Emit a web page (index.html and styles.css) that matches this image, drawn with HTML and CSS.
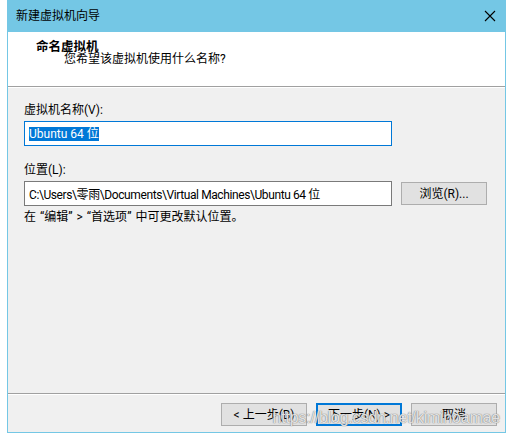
FILE: index.html
```html
<!DOCTYPE html>
<html lang="zh-CN">
<head>
<meta charset="utf-8">
<title>新建虚拟机向导</title>
<link rel="stylesheet" href="styles.css">
</head>
<body>
<div class="window">
  <div class="titlebar">
    <span class="title">新建虚拟机向导</span>
    <svg class="close" width="12" height="12" viewBox="0 0 12 12"><path d="M1 1L11 11M11 1L1 11" stroke="#000" stroke-width="1.1" fill="none"/></svg>
  </div>
  <div class="header">
    <div class="h-title">命名虚拟机</div>
    <div class="h-sub">您希望该虚拟机使用什么名称?</div>
  </div>
  <div class="content">
    <div class="label">虚拟机名称(V):</div>
    <div class="input focused"><span class="sel">Ubuntu 64 位</span></div>
    <div class="label second">位置(L):</div>
    <div class="row">
      <div class="input path">C:\Users\零雨\Documents\Virtual Machines\Ubuntu 64 位</div>
      <div class="btn browse">浏览(R)...</div>
    </div>
    <div class="hint">在<span class="ql">“</span>编辑<span class="qr">”</span>&gt;<span class="ql">“</span>首选项<span class="qr">”</span>中可更改默认位置。</div>
  </div>
  <div class="footer">
    <div class="btn">&lt; 上一步(B)</div>
    <div class="btn default">下一步(N) &gt;</div>
    <div class="btn">取消</div>
    <div class="watermark">https://blog.csdn.net/kiminoamae</div>
  </div>
</div>
</body>
</html>
```
FILE: styles.css
```css
html, body {
  margin: 0;
  padding: 0;
  background: #ffffff;
}
body {
  font-family: Roboto, "Noto Sans CJK SC", sans-serif;
  font-size: 12px;
  color: #000;
}
.window {
  margin-left: 7px;
  width: 497px;
  height: 432px;
  border: 1px solid #74c7e5;
  border-top: none;
  display: flex;
  flex-direction: column;
  background: #f0f0f0;
}
.titlebar {
  height: 32px;
  background: #74c7e5;
  margin: 0 -1px;
  display: flex;
  align-items: center;
  justify-content: space-between;
  padding: 0 10px 0 9px;
  box-sizing: border-box;
}
.title {
  font-size: 12px;
  line-height: 16px;
}
.close { display: block; }
.header {
  background: #fff;
  height: 55px;
  box-sizing: border-box;
  padding: 8px 0 0 28px;
  border-bottom: 1px solid #a0a0a0;
  line-height: 13px;
}
.h-title { font-weight: bold; font-size: 12.5px; }
.h-sub { padding-left: 28px; }
.content {
  flex: 1;
  border-top: 1px solid #fff;
  border-bottom: 1px solid #a0a0a0;
  padding: 14px 0 0 16px;
}
.label { line-height: 16px; }
.label.second { margin-top: 16px; }
.input {
  margin-top: 3px;
  width: 368px;
  height: 25px;
  box-sizing: border-box;
  background: #fff;
  border: 1px solid #7a7a7a;
  padding: 0 4px;
  display: flex;
  align-items: center;
  white-space: nowrap;
  overflow: hidden;
}
.input.focused { border-color: #0078d7; }
.input.path { letter-spacing: -0.4px; }
.sel {
  background: #0078d7;
  color: #fff;
  line-height: 14px;
}
.row {
  margin-top: 3px;
  display: flex;
  align-items: center;
  gap: 9px;
}
.row .input { margin-top: 0; }
.btn {
  width: 86px;
  height: 23px;
  box-sizing: border-box;
  background: #e1e1e1;
  border: 1px solid #adadad;
  display: flex;
  align-items: center;
  justify-content: center;
  line-height: 14px;
}
.btn.default { border: 2px solid #0078d7; }
.hint {
  margin-top: 3px;
  line-height: 16px;
}
.ql { padding-left: 4px; }
.qr { padding-right: 4px; }
.footer {
  position: relative;
  height: 38px;
  box-sizing: border-box;
  border-top: 1px solid #fff;
  padding: 8px 8px 0 0;
  display: flex;
  justify-content: flex-end;
  gap: 9px;
}
.watermark {
  position: absolute;
  right: 5px;
  top: 14px;
  font-family: "Liberation Sans", sans-serif;
  font-size: 16px;
  color: rgba(255, 255, 255, 0.8);
  text-shadow: 0 0 1px rgba(110, 110, 110, 0.9), 0 0 1px rgba(110, 110, 110, 0.7);
  letter-spacing: -0.2px;
  pointer-events: none;
}
```
